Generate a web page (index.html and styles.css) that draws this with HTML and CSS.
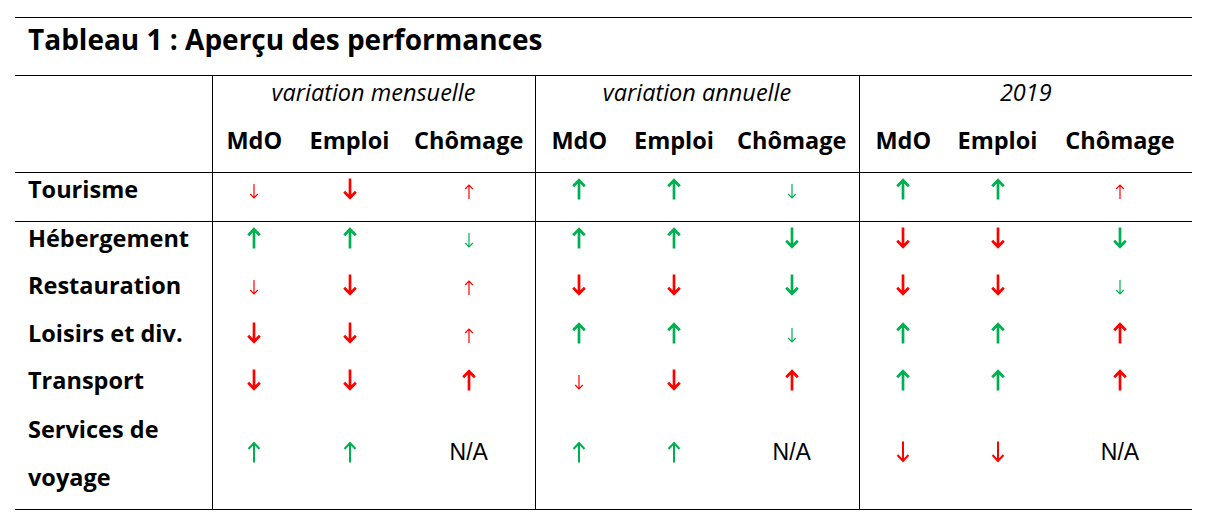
FILE: index.html
```html
<!DOCTYPE html>
<html lang="fr">
<head>
<meta charset="utf-8">
<title>Tableau 1 : Aperçu des performances</title>
<link rel="stylesheet" href="styles.css">
</head>
<body>
<svg class="defs" aria-hidden="true">
  <symbol id="ub" viewBox="0 0 14 22"><path d="M7 21.5V2.2M1.2 8.2L7 2.2L12.8 8.2" fill="none" stroke="currentColor" stroke-width="2.7"/></symbol>
  <symbol id="db" viewBox="0 0 14 22"><path d="M7 0.5V19.8M1.2 13.8L7 19.8L12.8 13.8" fill="none" stroke="currentColor" stroke-width="2.7"/></symbol>
  <symbol id="um" viewBox="0 0 14 22"><path d="M7 21.5V2M1.5 8L7 2L12.5 8" fill="none" stroke="currentColor" stroke-width="2"/></symbol>
  <symbol id="dm" viewBox="0 0 14 22"><path d="M7 0.5V20M1.5 14L7 20L12.5 14" fill="none" stroke="currentColor" stroke-width="2"/></symbol>
  <symbol id="us" viewBox="0 0 10 15"><path d="M5 15V1.2M1.2 5L5 1.2L8.8 5" fill="none" stroke="currentColor" stroke-width="1.2"/></symbol>
  <symbol id="ds" viewBox="0 0 10 15"><path d="M5 0V13.8M1.2 10L5 13.8L8.8 10" fill="none" stroke="currentColor" stroke-width="1.2"/></symbol>
</svg>
<div class="page">
  <div class="title">Tableau 1 : Aperçu des performances</div>
  <table class="perf">
    <colgroup>
      <col class="w-label">
      <col class="w-a1"><col class="w-b1"><col class="w-c1">
      <col class="w-a2"><col class="w-b2"><col class="w-c2">
      <col class="w-a3"><col class="w-b3"><col class="w-c3">
    </colgroup>
    <thead>
      <tr class="grp">
        <th class="label"></th>
        <th colspan="3" class="gs">variation mensuelle</th>
        <th colspan="3" class="gs">variation annuelle</th>
        <th colspan="3" class="gs">2019</th>
      </tr>
      <tr class="sub">
        <th class="label"></th>
        <th class="gs">MdO</th><th>Emploi</th><th>Chômage</th>
        <th class="gs">MdO</th><th>Emploi</th><th>Chômage</th>
        <th class="gs">MdO</th><th>Emploi</th><th>Chômage</th>
      </tr>
    </thead>
    <tbody>
      <tr class="first">
        <th class="label">Tourisme</th>
        <td class="gs"><svg class="sm red"><use href="#ds"/></svg></td>
        <td><svg class="bg red"><use href="#db"/></svg></td>
        <td><svg class="sm red"><use href="#us"/></svg></td>
        <td class="gs"><svg class="bg grn"><use href="#ub"/></svg></td>
        <td><svg class="bg grn"><use href="#ub"/></svg></td>
        <td><svg class="sm grn"><use href="#ds"/></svg></td>
        <td class="gs"><svg class="bg grn"><use href="#ub"/></svg></td>
        <td><svg class="bg grn"><use href="#ub"/></svg></td>
        <td><svg class="sm red"><use href="#us"/></svg></td>
      </tr>
      <tr>
        <th class="label">Hébergement</th>
        <td class="gs"><svg class="bg grn"><use href="#ub"/></svg></td>
        <td><svg class="bg grn"><use href="#ub"/></svg></td>
        <td><svg class="sm grn"><use href="#ds"/></svg></td>
        <td class="gs"><svg class="bg grn"><use href="#ub"/></svg></td>
        <td><svg class="bg grn"><use href="#ub"/></svg></td>
        <td><svg class="bg grn"><use href="#db"/></svg></td>
        <td class="gs"><svg class="bg red"><use href="#db"/></svg></td>
        <td><svg class="bg red"><use href="#db"/></svg></td>
        <td><svg class="bg grn"><use href="#db"/></svg></td>
      </tr>
      <tr>
        <th class="label">Restauration</th>
        <td class="gs"><svg class="sm red"><use href="#ds"/></svg></td>
        <td><svg class="bg red"><use href="#db"/></svg></td>
        <td><svg class="sm red"><use href="#us"/></svg></td>
        <td class="gs"><svg class="bg red"><use href="#db"/></svg></td>
        <td><svg class="bg red"><use href="#db"/></svg></td>
        <td><svg class="bg grn"><use href="#db"/></svg></td>
        <td class="gs"><svg class="bg red"><use href="#db"/></svg></td>
        <td><svg class="bg red"><use href="#db"/></svg></td>
        <td><svg class="sm grn"><use href="#ds"/></svg></td>
      </tr>
      <tr>
        <th class="label">Loisirs et div.</th>
        <td class="gs"><svg class="bg red"><use href="#db"/></svg></td>
        <td><svg class="bg red"><use href="#db"/></svg></td>
        <td><svg class="sm red"><use href="#us"/></svg></td>
        <td class="gs"><svg class="bg grn"><use href="#ub"/></svg></td>
        <td><svg class="bg grn"><use href="#ub"/></svg></td>
        <td><svg class="sm grn"><use href="#ds"/></svg></td>
        <td class="gs"><svg class="bg grn"><use href="#ub"/></svg></td>
        <td><svg class="bg grn"><use href="#ub"/></svg></td>
        <td><svg class="bg red"><use href="#ub"/></svg></td>
      </tr>
      <tr>
        <th class="label">Transport</th>
        <td class="gs"><svg class="bg red"><use href="#db"/></svg></td>
        <td><svg class="bg red"><use href="#db"/></svg></td>
        <td><svg class="bg red"><use href="#ub"/></svg></td>
        <td class="gs"><svg class="sm red"><use href="#ds"/></svg></td>
        <td><svg class="bg red"><use href="#db"/></svg></td>
        <td><svg class="bg red"><use href="#ub"/></svg></td>
        <td class="gs"><svg class="bg grn"><use href="#ub"/></svg></td>
        <td><svg class="bg grn"><use href="#ub"/></svg></td>
        <td><svg class="bg red"><use href="#ub"/></svg></td>
      </tr>
      <tr class="last">
        <th class="label"><span class="ln">Services de</span><span class="ln">voyage</span></th>
        <td class="gs"><svg class="bg grn"><use href="#um"/></svg></td>
        <td><svg class="bg grn"><use href="#um"/></svg></td>
        <td class="na">N/A</td>
        <td class="gs"><svg class="bg grn"><use href="#um"/></svg></td>
        <td><svg class="bg grn"><use href="#um"/></svg></td>
        <td class="na">N/A</td>
        <td class="gs"><svg class="bg red"><use href="#dm"/></svg></td>
        <td><svg class="bg red"><use href="#dm"/></svg></td>
        <td class="na">N/A</td>
      </tr>
    </tbody>
  </table>
</div>
</body>
</html>
```
FILE: styles.css
```css
* { box-sizing: border-box; }

html, body {
  margin: 0;
  padding: 0;
  background: #fff;
}

body {
  font-family: "Open Sans", "DejaVu Sans", sans-serif;
  color: #000;
}

.defs {
  width: 0;
  height: 0;
  position: absolute;
  overflow: hidden;
}

.page {
  padding: 17px 0 0 15px;
  width: 1192px;
}

.title {
  border-top: 1px solid #000;
  border-bottom: 1px solid #000;
  padding: 1px 0 16px 13px;
  font-size: 28px;
  font-weight: 700;
  line-height: 40px;
  height: 59px;
}

.perf {
  width: 1177px;
  table-layout: fixed;
  border-collapse: collapse;
  font-size: 23.5px;
  line-height: 32px;
}

.w-label { width: 197px; }
.w-a1 { width: 84px; }
.w-b1 { width: 107px; }
.w-c1 { width: 132px; }
.w-a2 { width: 88px; }
.w-b2 { width: 102px; }
.w-c2 { width: 134px; }
.w-a3 { width: 88px; }
.w-b3 { width: 101px; }
.w-c3 { width: 144px; }

.perf th,
.perf td {
  padding: 0 0 16px;
  text-align: center;
  vertical-align: middle;
  white-space: nowrap;
}

.perf tbody th,
.perf tbody td {
  padding-bottom: 15.5px;
}

.perf th {
  font-weight: 700;
}

.perf .grp th {
  font-weight: 400;
  font-style: italic;
}

.perf .label {
  text-align: left;
  padding-left: 13px;
  font-weight: 700;
  font-style: normal;
}

.perf .gs {
  border-left: 1px solid #000;
}

.perf .sub th,
.perf .first th,
.perf .first td {
  border-bottom: 1px solid #000;
}

.perf .last th,
.perf .last td {
  border-bottom: 1px solid #000;
  padding-bottom: 16.5px;
}

.perf .last .label {
  vertical-align: top;
  padding-top: 1px;
}

.ln {
  display: block;
}

.ln + .ln {
  margin-top: 16px;
}

.na {
  font-family: "Liberation Sans", Arial, sans-serif;
  font-size: 23px;
}

svg.bg {
  width: 14px;
  height: 22px;
  vertical-align: -2px;
}

svg.sm {
  width: 10px;
  height: 15px;
  vertical-align: -1px;
}

.red { color: #ff0000; }
.grn { color: #00b050; }
```
